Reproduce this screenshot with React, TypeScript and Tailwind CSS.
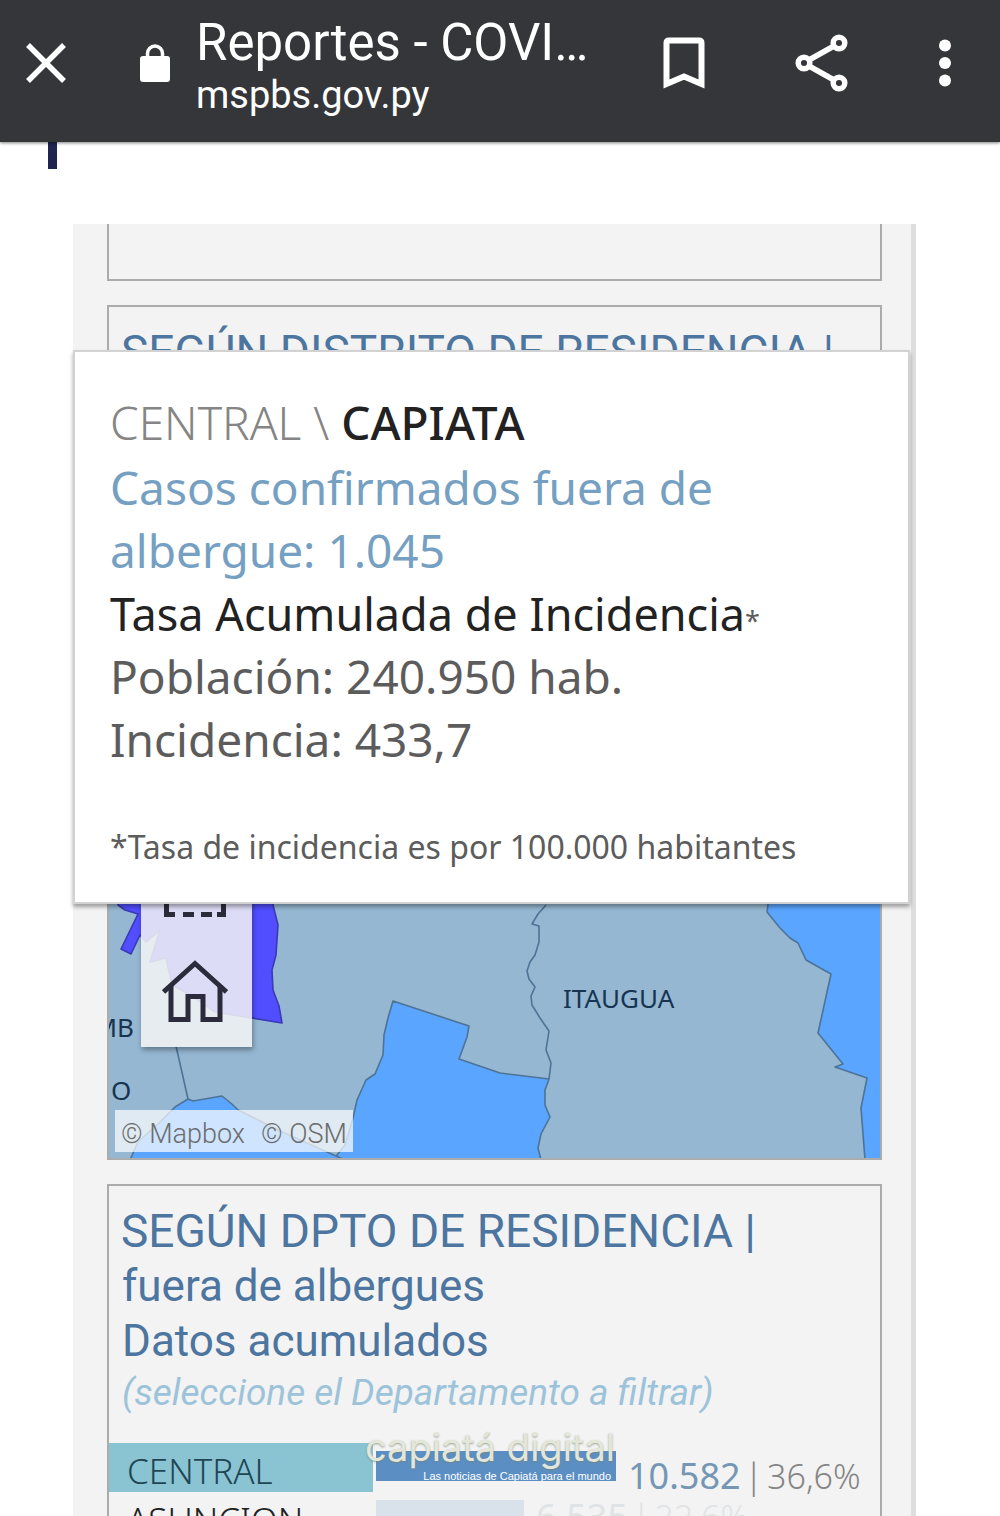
import { ReactNode } from "react";

const departments = [
  { name: "CENTRAL", cases: "10.582", share: "36,6%", width: 240, selected: true },
  { name: "ASUNCION", cases: "6.535", share: "22,6%", width: 148, selected: false },
];

function TopBar() {
  return (
    <header className="relative z-20 flex h-[142px] shrink-0 items-center bg-[#35363a] pb-4 pl-[26px] pr-[49px] font-['Roboto',sans-serif] text-white shadow-[0_1px_3px_rgba(0,0,0,0.5)]">
      <button aria-label="Cerrar" className="shrink-0">
        <svg width="40" height="40" viewBox="0 0 40 40" stroke="currentColor" strokeWidth="5.5" fill="none">
          <path d="M2 2 38 38M38 2 2 38" />
        </svg>
      </button>
      <svg className="ml-[74px] shrink-0" width="30" height="39" viewBox="0 0 30 39" aria-hidden>
        <rect x="0" y="12" width="30" height="26" rx="3" fill="currentColor" />
        <path d="M7.500 13V9.500a7.500 7.500 0 0 1 15 0V13" fill="none" stroke="currentColor" strokeWidth="3.500" />
      </svg>
      <div className="ml-[26px] min-w-0 flex-1 whitespace-nowrap pt-[7px]">
        <p className="text-[51px] leading-[56px]">Reportes - COVI…</p>
        <p className="text-[38px] leading-[48px]">mspbs.gov.py</p>
      </div>
      <div className="flex shrink-0 items-center gap-[90px]">
        <button aria-label="Guardar en marcadores">
          <svg width="42" height="52" viewBox="0 0 42 52" fill="none" stroke="currentColor" strokeWidth="6">
            <path d="M3.500 47V6q0-2.500 2.500-2.500H36q2.500 0 2.500 2.500V47L21 39.500Z" />
          </svg>
        </button>
        <button aria-label="Compartir">
          <svg width="54" height="58" viewBox="0 0 54 58" fill="none" stroke="currentColor" strokeWidth="5.500">
            <circle cx="9" cy="29" r="5.800" />
            <circle cx="44" cy="9" r="5.800" />
            <circle cx="44" cy="49" r="5.800" />
            <path d="M14 26 39 12M14 32 39 46" />
          </svg>
        </button>
        <button aria-label="Más opciones">
          <svg width="12" height="48" viewBox="0 0 12 48" fill="currentColor">
            <circle cx="6" cy="6.500" r="6" />
            <circle cx="6" cy="24" r="6" />
            <circle cx="6" cy="41.500" r="6" />
          </svg>
        </button>
      </div>
    </header>
  );
}

function Card({ title, children }: { title: string; children: ReactNode }) {
  return (
    <section className="shrink-0 border-2 border-[#ababab] pt-[18px]">
      <h2 className="whitespace-nowrap px-3 font-['Roboto',sans-serif] text-[46px] leading-[55px] text-[#4c759f]">
        {title}
      </h2>
      {children}
    </section>
  );
}

function MapControls() {
  return (
    <div className="absolute bottom-[111px] left-8 flex w-[111px] flex-col items-center gap-[43px] bg-[#f6f6f6]/85 pb-6 pr-1 pt-8 text-[#2b2b3c] shadow-[1px_3px_5px_rgba(0,0,0,0.35)]">
      <button aria-label="Selección rectangular">
        <svg width="66" height="66" viewBox="0 0 66 66" fill="none" stroke="currentColor" strokeWidth="5">
          <path d="M4.500 14V4.500H14M22 4.500H33M40 4.500H50M54 4.500H61.500V14M61.500 22V44M4.500 22V44" />
          <path d="M4.500 52V63.500H13M21 63.500H32M39 63.500H50M55 63.500H61.500V52" />
        </svg>
      </button>
      <button aria-label="Restablecer mapa">
        <svg width="66" height="63" viewBox="0 0 66 63" fill="none" stroke="currentColor" strokeWidth="5">
          <path d="M1.500 32 33 3.500 64.500 32" />
          <path d="M9 25V59.500H26V36.500H41V59.500H58V25" />
        </svg>
      </button>
    </div>
  );
}

function DistrictMap() {
  return (
    <div className="relative h-[778px] overflow-hidden bg-[#95b7d2]">
      <svg
        className="h-full w-full"
        viewBox="109 380 771 778"
        preserveAspectRatio="xMinYMax slice"
        fill="none"
        stroke="#4d7396"
        strokeWidth="1.600"
        strokeLinejoin="round"
      >
        <path
          fill="#504eff"
          stroke="#3b3ab5"
          d="M118 905 125 910 138 914 121 949 131 954 140 935 146 942 160 930 150 962 166 958 172 985 192 996 215 1012 252 1018 282 1023 279 1006 273 990 272 970 276 955 278 925 273 905 273 760 118 760Z"
        />
        <path
          fill="#5aa5ff"
          d="M393 1001 469 1026 467 1037 459 1059 500 1073 549 1079 545 1090 545 1105 550 1117 541 1134 538 1148 541 1160 333 1160 345 1145 353 1118 357 1100 366 1080 375 1074 383 1055 384 1035 388 1018Z"
        />
        <path
          fill="#5aa5ff"
          d="M130 1160 138 1142 160 1122 175 1107 188 1099 193 1101 222 1096 233 1105 238 1110 280 1131 345 1160Z"
        />
        <path
          fill="#5aa5ff"
          d="M768 905 767 912 780 928 790 938 798 943 806 960 831 974 818 1033 843 1064 835 1067 867 1078 861 1108 865 1160 884 1160 884 760 768 760Z"
        />
        <path d="M546 905 538 914 532 924 539 926 539 942 535 955 530 962 527 971 529 979 535 987 531 996 532 1005 540 1018 549 1031 546 1050 551 1063 549 1079" />
        <path d="M176 1046 188 1099" />
        <g fill="#173450" stroke="none" fontSize="26" fontWeight="400" fontFamily="Noto Sans, sans-serif">
          <text x="563" y="1008">ITAUGUA</text>
          <text x="134" y="1037" textAnchor="end">MB</text>
          <text x="111" y="1100">O</text>
        </g>
      </svg>
      <MapControls />
      <div className="absolute bottom-1.5 left-1.5 flex h-[42px] items-center gap-4 bg-white/70 px-1.5 pt-1.5 font-['Roboto',sans-serif] text-[27px] font-light text-[#6c6c6c]">
        <a href="#mapbox">© Mapbox</a>
        <a href="#osm">© OSM</a>
      </div>
    </div>
  );
}

function Tooltip() {
  return (
    <div
      role="tooltip"
      className="absolute left-0 right-px top-[126px] z-10 border-2 border-[#d2d2d2] bg-white px-[35px] pb-6 pt-[39px] font-['Noto_Sans',sans-serif] text-[46px] leading-[63px] text-[#5c5c5c] shadow-[0_3px_4px_rgba(0,0,0,0.35)]"
    >
      <p className="mb-0.5 whitespace-nowrap text-[#222]">
        <span className="font-light text-[#858585]">CENTRAL \</span> <span className="font-medium">CAPIATA</span>
      </p>
      <p className="text-[#76a0c2]">
        Casos confirmados fuera de
        <br />
        albergue: 1.045
      </p>
      <p className="whitespace-nowrap text-[45px] text-[#222]">
        Tasa Acumulada de Incidencia<span className="text-[27px] leading-none text-[#5c5c5c]">*</span>
      </p>
      <p>Población: 240.950 hab.</p>
      <p>Incidencia: 433,7</p>
      <p className="mt-11 whitespace-nowrap text-[32px]">*Tasa de incidencia es por 100.000 habitantes</p>
    </div>
  );
}

function Watermark() {
  return (
    <div className="pointer-events-none absolute left-[256px] top-[-18px] text-right">
      <p className="whitespace-nowrap font-['Inter',sans-serif] text-[38px] leading-[44px] text-[#e3e6d8] [text-shadow:0_1px_2px_rgba(120,130,110,0.7)]">
        capiatá digital
      </p>
      <p className="whitespace-nowrap pr-1 font-['Liberation_Sans',sans-serif] text-[11px] leading-[14px] text-white">
        Las noticias de Capiatá para el mundo
      </p>
    </div>
  );
}

function DepartmentChart() {
  return (
    <div className="relative mt-4 font-['Noto_Sans',sans-serif]">
      {departments.map((d) => (
        <button key={d.name} className="flex h-[49px] w-full items-start text-left">
          <span
            className={`h-full w-[264px] shrink-0 pl-[18px] pt-1 text-[35px] leading-[48px] font-light ${
              d.selected ? "bg-[#8ac4d3] text-[#1e4654]" : "text-[#222]"
            }`}
          >
            {d.name}
          </span>
          <span
            className={`ml-[3px] mt-2 h-[30px] shrink-0 ${d.selected ? "bg-[#5b8fc4]" : "bg-[#d9e1ea]"}`}
            style={{ width: d.width }}
          />
          <span
            className={`ml-3 whitespace-nowrap text-[36px] leading-[49px] ${
              d.selected ? "pt-2 text-[#7597b4]" : "text-[#e0e3e6]"
            }`}
          >
            {d.cases}
            <span className={`text-[34px] font-light ${d.selected ? "text-[#858585]" : ""}`}>
              <span className="mx-1">|</span>
              {d.share}
            </span>
          </span>
        </button>
      ))}
      <Watermark />
    </div>
  );
}

export default function App() {
  return (
    <div className="flex h-screen flex-col overflow-hidden bg-white">
      <TopBar />
      <main className="flex min-h-0 flex-1 flex-col">
        <div className="ml-[48px] h-[27px] w-[9px] shrink-0 bg-[#1f2450]" />
        <div className="relative ml-[73px] mr-[84px] mt-[55px] min-h-0 flex-1 border-r-[5px] border-[#dedede] bg-[#f3f3f3] pl-[34px] pr-[29px]">
          <div className="flex h-full flex-col gap-6 overflow-hidden">
            <section className="h-[57px] shrink-0 border-2 border-t-0 border-[#ababab]" />
            <Card title="SEGÚN DISTRITO DE RESIDENCIA |">
              <DistrictMap />
            </Card>
            <Card title="SEGÚN DPTO DE RESIDENCIA |">
              <div className="px-[13px] pb-2.5 font-['Roboto',sans-serif] text-[44px] leading-[55px] text-[#4c759f]">
                <p>fuera de albergues</p>
                <p>Datos acumulados</p>
                <p className="text-[37px] leading-[48px] italic text-[#9cc3d9]">
                  (seleccione el Departamento a filtrar)
                </p>
              </div>
              <DepartmentChart />
            </Card>
          </div>
          <Tooltip />
        </div>
      </main>
    </div>
  );
}
